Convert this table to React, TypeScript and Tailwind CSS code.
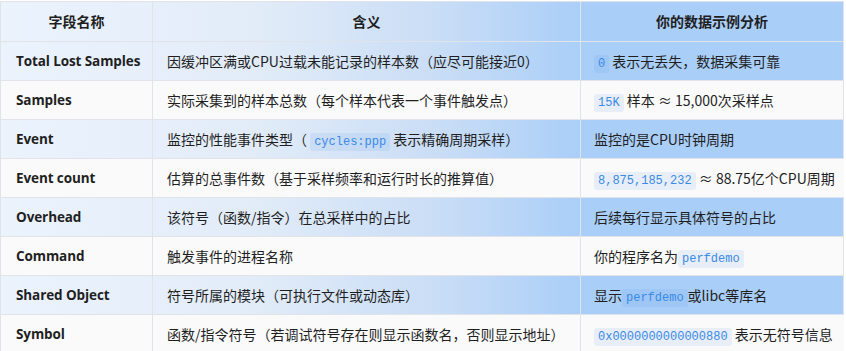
import React from "react";

const Code = ({ children }: { children: React.ReactNode }) => (
  <code className="font-['Liberation_Mono',monospace] text-[12px] text-[#3a8ae6] bg-[rgba(66,139,230,0.1)] rounded-[3px] px-[4px] py-[2px] leading-[15px]">
    {children}
  </code>
);

type Row = { name: string; meaning: React.ReactNode; example: React.ReactNode };

const rows: Row[] = [
  {
    name: "Total Lost Samples",
    meaning: "因缓冲区满或CPU过载未能记录的样本数（应尽可能接近0）",
    example: (
      <>
        <Code>0</Code> 表示无丢失，数据采集可靠
      </>
    ),
  },
  {
    name: "Samples",
    meaning: "实际采集到的样本总数（每个样本代表一个事件触发点）",
    example: (
      <>
        <Code>15K</Code> 样本 ≈ 15,000次采样点
      </>
    ),
  },
  {
    name: "Event",
    meaning: (
      <>
        监控的性能事件类型（ <Code>cycles:ppp</Code> 表示精确周期采样）
      </>
    ),
    example: "监控的是CPU时钟周期",
  },
  {
    name: "Event count",
    meaning: "估算的总事件数（基于采样频率和运行时长的推算值）",
    example: (
      <>
        <Code>8,875,185,232</Code> ≈ 88.75亿个CPU周期
      </>
    ),
  },
  {
    name: "Overhead",
    meaning: "该符号（函数/指令）在总采样中的占比",
    example: "后续每行显示具体符号的占比",
  },
  {
    name: "Command",
    meaning: "触发事件的进程名称",
    example: (
      <>
        你的程序名为<Code>perfdemo</Code>
      </>
    ),
  },
  {
    name: "Shared Object",
    meaning: "符号所属的模块（可执行文件或动态库）",
    example: (
      <>
        显示<Code>perfdemo</Code>或libc等库名
      </>
    ),
  },
  {
    name: "Symbol",
    meaning: "函数/指令符号（若调试符号存在则显示函数名，否则显示地址）",
    example: (
      <>
        <Code>0x0000000000000880</Code> 表示无符号信息
      </>
    ),
  },
];

const grad =
  "bg-[linear-gradient(90deg,#ebf3fd_0%,#e2ecf8_30%,#c9ddf6_52%,#a9cef8_69%,#a9cef8_100%)]";

export default function App() {
  return (
    <div className="w-[846px] h-[351px] overflow-hidden bg-white pt-[1px] font-['Segoe_UI','Noto_Sans_CJK_SC',sans-serif] text-[14px] text-[#1f1f1f]">
      <div className="w-[844px] border-l border-t border-[#e0e3e7]">
        <div className={`flex h-[40px] border-b border-[#e0e3e7] font-bold ${grad}`}>
          <div className="w-[152px] shrink-0 border-r border-[#e0e3e7] flex items-center justify-center">字段名称</div>
          <div className="w-[428px] shrink-0 border-r border-[#e0e3e7] flex items-center justify-center">含义</div>
          <div className="flex-1 border-r border-[#e0e3e7] flex items-center justify-center">你的数据示例分析</div>
        </div>
        {rows.map((r, i) => (
          <div
            key={r.name}
            className={`flex h-[39px] border-b border-[#e0e3e7] ${i % 2 === 0 ? grad : "bg-[#fafafa]"}`}
          >
            <div className="w-[152px] shrink-0 border-r border-[#e0e3e7] flex items-center px-[15px] font-bold font-['Open_Sans',sans-serif] text-[13.5px] tracking-[-0.1px] whitespace-nowrap">
              {r.name}
            </div>
            <div className="w-[428px] shrink-0 border-r border-[#e0e3e7] flex items-center px-[14px] whitespace-nowrap">
              <span>{r.meaning}</span>
            </div>
            <div className="flex-1 border-r border-[#e0e3e7] flex items-center px-[13px] whitespace-nowrap">
              <span>{r.example}</span>
            </div>
          </div>
        ))}
      </div>
    </div>
  );
}
